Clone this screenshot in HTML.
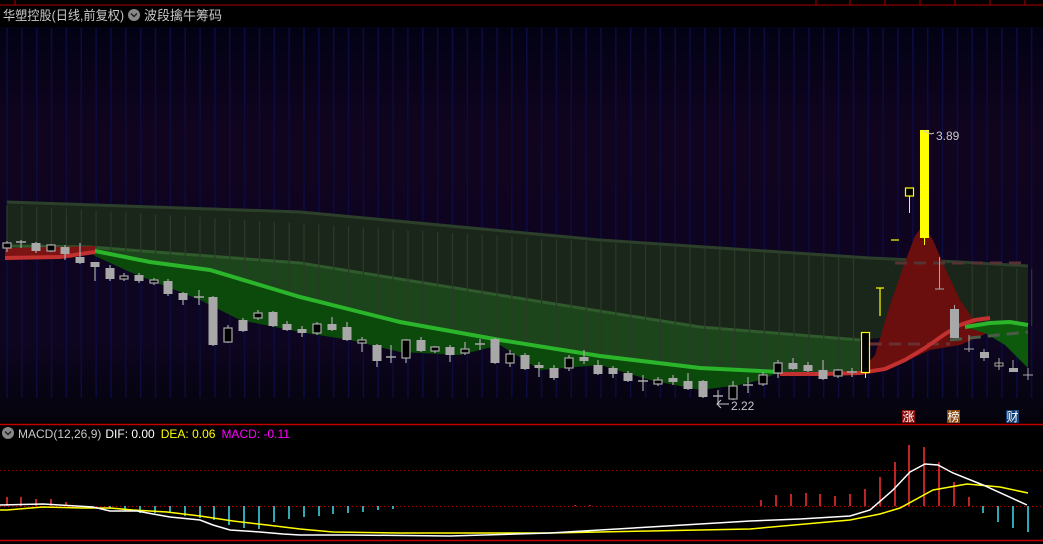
<!DOCTYPE html>
<html><head><meta charset="utf-8"><style>
html,body{margin:0;padding:0;background:#000;width:1043px;height:544px;overflow:hidden}
svg{display:block}
text{font-family:"Liberation Sans","Noto Sans CJK SC",sans-serif}
</style></head><body>
<svg id="s" width="1043" height="544" xmlns="http://www.w3.org/2000/svg">
<defs>
<linearGradient id="bg" x1="0" y1="0" x2="0" y2="1">
<stop offset="0" stop-color="#020214"/>
<stop offset="0.25" stop-color="#10041f"/>
<stop offset="0.8" stop-color="#0e0520"/>
<stop offset="0.93" stop-color="#060412"/>
<stop offset="1" stop-color="#04030c"/>
</linearGradient>
</defs>
<rect x="0" y="0" width="1043" height="544" fill="#000"/>
<line x1="0" y1="5" x2="1043" y2="5" stroke="#b00000" stroke-width="1"/>
<line x1="15" y1="0" x2="15" y2="5" stroke="#b00000"/>
<g stroke="#b00000"><line x1="816" y1="0" x2="816" y2="5"/><line x1="850" y1="0" x2="850" y2="5"/><line x1="885" y1="0" x2="885" y2="5"/><line x1="920" y1="0" x2="920" y2="5"/><line x1="955" y1="0" x2="955" y2="5"/><line x1="990" y1="0" x2="990" y2="5"/><line x1="1025" y1="0" x2="1025" y2="5"/></g>
<text x="3" y="20" font-size="13" fill="#c8c8c8" textLength="121" lengthAdjust="spacingAndGlyphs">华塑控股(日线,前复权)</text>
<circle cx="134" cy="15" r="6" fill="#888"/>
<path d="M131 13.5 L134 16.5 L137 13.5" stroke="#222" stroke-width="1.5" fill="none"/>
<text x="144" y="20" font-size="13" fill="#c8c8c8">波段擒牛筹码</text>
<rect x="0" y="27" width="1043" height="395" fill="url(#bg)"/>
<g id="vl" stroke="#0c0c40" stroke-width="1.5"></g>
<polygon fill="#1b261a" points="7,202 300,212 600,240 870,258 960,262 1028,266 1028,330 960,330 860,340 700,327 530,300 300,263 90,247 7,246"/>
<polyline fill="none" stroke="#2c3f2a" stroke-width="3" points="7,202 300,212 600,240 870,258 960,262 1028,266"/>
<polygon fill="#1d451c" points="7,246 90,247 300,263 530,300 700,327 860,340 860,372 780,372 700,368 600,356 500,340 400,322 300,297 210,270 150,262 90,250"/>
<polyline fill="none" stroke="#2e5a2c" stroke-width="3" points="7,246 90,247 300,263 530,300 700,327 860,340"/>
<polygon fill="#0b4a0b" points="90,250 150,262 210,270 300,297 400,322 500,340 600,356 700,368 780,372 760,380 740,385 700,390 650,380 600,365 540,370 500,345 460,355 400,352 350,340 300,332 240,320 200,300 130,272 95,256"/>
<g id="vl2" stroke="#2a3a28" stroke-width="1.2"></g>
<polyline fill="none" stroke="#2ab52a" stroke-width="4" points="90,250 150,262 210,270 300,297 400,322 500,340 600,356 700,368 780,372"/>
<polygon fill="#7d1414" points="5,248 95,246 95,252 70,258 5,260"/>
<polyline fill="none" stroke="#c33030" stroke-width="4" points="5,258 60,257 95,252"/>
<polygon fill="#6b0e0e" points="860,372 875,355 890,305 905,262 915,236 923,225 933,240 945,268 960,300 975,322 990,332 960,345 930,350 900,364"/>
<polygon fill="#0d5a0d" points="965,327 990,323 1010,322 1028,325 1028,368 1005,345 985,333"/>
<polyline fill="none" stroke="#2ab52a" stroke-width="4" points="965,327 990,323 1010,322 1028,325"/>
<line x1="895" y1="263" x2="1028" y2="263" stroke="#553333" stroke-width="3" stroke-dasharray="12,7"/>
<line x1="870" y1="344" x2="950" y2="344" stroke="#6a3030" stroke-width="3" stroke-dasharray="12,7"/>
<line x1="950" y1="340" x2="1028" y2="332" stroke="#4a5a48" stroke-width="3" stroke-dasharray="12,7"/>
<polyline fill="none" stroke="#c33030" stroke-width="4" points="780,374 820,374 860,373 885,369 905,360 925,348 945,334 960,325 975,320 990,318"/>
<g id="cd"></g>
<text x="936" y="140" font-size="12" fill="#c8c8c8">3.89</text>
<path d="M924 131 L931 134 L934 133" stroke="#c8c8c8" fill="none"/>
<text x="731" y="410" font-size="12" fill="#c8c8c8">2.22</text>
<path d="M729 404 L717 404 M721 400 L717 404 L721 408" stroke="#c8c8c8" fill="none"/>
<rect x="902" y="410" width="13" height="13" fill="#8b0c0c"/><text x="902.5" y="421" font-size="12" fill="#fff">涨</text>
<rect x="947" y="410" width="13" height="13" fill="#8a4a12"/><text x="947.5" y="421" font-size="12" fill="#fff">榜</text>
<rect x="1006" y="410" width="13" height="13" fill="#123f78"/><text x="1006.5" y="421" font-size="12" fill="#fff">财</text>
<line x1="0" y1="424.5" x2="1043" y2="424.5" stroke="#c00000" stroke-width="1.5"/>
<circle cx="8" cy="433" r="6" fill="#888"/>
<path d="M5 431.5 L8 434.5 L11 431.5" stroke="#222" stroke-width="1.5" fill="none"/>
<text x="18" y="438" font-size="12"><tspan fill="#c8c8c8">MACD(12,26,9)</tspan><tspan fill="#fff" dx="4">DIF: 0.00</tspan><tspan fill="#ffff00" dx="6">DEA: 0.06</tspan><tspan fill="#ff00ff" dx="6">MACD: -0.11</tspan></text>
<line x1="0" y1="470.5" x2="1043" y2="470.5" stroke="#a00000" stroke-dasharray="1,3"/>
<line x1="0" y1="506.5" x2="1043" y2="506.5" stroke="#c00000" stroke-dasharray="1,3"/>
<g id="hb"></g>
<polyline fill="none" stroke="#ffff00" stroke-width="1.5" points="0,510 7,510 43,507 83,508 110,508 133,510 167,512 200,516 233,521 267,525 300,529 333,532 400,533 550,533 650,531 750,529 850,520 880,514 900,508 933,490 967,484 1000,487 1028,493"/>
<polyline fill="none" stroke="#ffffff" stroke-width="1.5" points="0,505 43,504 93,507 110,511 137,511 153,514 170,517 200,520 213,525 230,530 260,532 283,534 300,535 350,535 450,536 550,533 600,530 650,527 700,524 750,521 800,519 850,516 870,510 893,490 910,472 925,464 938,465 953,473 983,485 1027,505"/>
<line x1="0" y1="540.5" x2="1043" y2="540.5" stroke="#c00000" stroke-width="1.5"/>
</svg>
<script>
var NS="http://www.w3.org/2000/svg";
function el(p,n,a){var e=document.createElementNS(NS,n);for(var k in a)e.setAttribute(k,a[k]);p.appendChild(e);return e;}
var vl=document.getElementById('vl'),vl2=document.getElementById('vl2');
for(var i=0;i<70;i++){var x=7+14.85*i;el(vl,'line',{x1:x,y1:28,x2:x,y2:398});}
function T(x){return 202+64*(x-7)/1021;}
var GP=[[0,246],[90,248],[150,262],[210,270],[300,297],[400,322],[500,340],[600,356],[700,368],[780,372],[860,372]];
function Gf(x){for(var i=1;i<GP.length;i++){if(x<=GP[i][0]){var a=GP[i-1],b=GP[i];return a[1]+(b[1]-a[1])*(x-a[0])/(b[0]-a[0]);}}return 372;}
for(var i=0;i<70;i++){var x=7+14.85*i;if(x>860&&x<960)continue;el(vl2,'line',{x1:x,y1:T(x)+3,x2:x,y2:x<960?Gf(x)-2:326});}
var C=[
[7,243,248,'h',241,252],[21,242,244,'c',240,248],[36,243,251,'g',242,253],[51,245,251,'h',244,252],[65,247,254,'g',245,260],
[80,257,263,'g',243,264],[95,262,267,'g',262,281],[110,268,279,'g',265,281],[124,276,279,'h',273,281],[139,275,281,'g',273,283],
[154,280,283,'h',278,285],[168,281,294,'g',279,296],[183,293,300,'g',292,305],[199,297,299,'c',290,305],[213,297,345,'g',296,346],
[228,328,342,'h',325,343],[243,320,331,'g',318,332],[258,313,318,'h',310,320],[273,312,326,'g',311,327],[287,324,330,'g',321,331],
[302,329,333,'g',326,337],[317,324,333,'h',322,335],[332,324,330,'g',317,331],[347,327,340,'g',322,341],[362,340,343,'h',337,352],
[377,345,361,'g',344,367],[391,357,358,'c',345,363],[406,340,358,'h',339,363],[421,340,351,'g',337,352],[435,347,351,'h',346,353],
[450,347,355,'g',345,362],[465,349,353,'h',342,355],[480,344,345,'c',339,350],[495,339,363,'g',338,364],[510,354,363,'h',350,367],
[525,355,369,'g',353,370],[539,365,368,'g',362,377],[554,368,378,'g',365,380],[569,358,368,'h',355,371],[584,357,361,'g',350,364],
[598,365,374,'g',360,375],[613,368,374,'g',366,378],[628,373,381,'g',371,382],[643,381,382,'c',375,391],[658,380,384,'h',377,386],
[673,378,382,'g',375,385],[688,381,389,'g',373,390],[703,381,397,'g',380,398],[718,396,397,'c',390,404],[733,386,399,'h',381,400],
[748,385,386,'c',377,393],[763,375,384,'h',372,386],[778,363,373,'h',360,378],[793,363,369,'g',358,370],[808,365,371,'g',362,372],
[823,370,379,'g',360,380],[838,370,376,'h',369,378],[852,372,373,'c',368,377]];
var cd=document.getElementById('cd');
C.forEach(function(c){var x=c[0];var col='#a8a8a8';
 el(cd,'line',{x1:x,y1:c[4],x2:x,y2:c[5],stroke:col,'stroke-width':1.2});
 if(c[3]=='c'){el(cd,'line',{x1:x-5,y1:c[1],x2:x+5,y2:c[1],stroke:col,'stroke-width':1.5});}
 else if(c[3]=='g'){el(cd,'rect',{x:x-4.5,y:c[1],width:9,height:c[2]-c[1],fill:col});}
 else{el(cd,'rect',{x:x-4,y:c[1],width:8,height:Math.max(c[2]-c[1],2),fill:'#000',stroke:col,'stroke-width':1.2});}
});
var Y='#ffff00',G='#a8a8a8';
el(cd,'rect',{x:861.5,y:332.5,width:8,height:40,fill:'#000',stroke:Y,'stroke-width':1.2});
el(cd,'line',{x1:865.5,y1:372,x2:865.5,y2:378,stroke:Y});
el(cd,'line',{x1:880,y1:288,x2:880,y2:316,stroke:Y,'stroke-width':1.2});
el(cd,'line',{x1:876,y1:288,x2:884,y2:288,stroke:Y,'stroke-width':1.2});
el(cd,'line',{x1:891,y1:240,x2:899,y2:240,stroke:Y,'stroke-width':1.2});
el(cd,'rect',{x:905.5,y:188,width:8,height:8,fill:'#000',stroke:Y,'stroke-width':1.2});
el(cd,'line',{x1:909.5,y1:196,x2:909.5,y2:213,stroke:Y});
el(cd,'rect',{x:920,y:130,width:9,height:108,fill:Y});
el(cd,'line',{x1:924.5,y1:238,x2:924.5,y2:245,stroke:Y});
el(cd,'line',{x1:939.5,y1:257,x2:939.5,y2:289,stroke:G});
el(cd,'line',{x1:935,y1:289,x2:944,y2:289,stroke:G});
el(cd,'rect',{x:950,y:309,width:9,height:29,fill:G});
el(cd,'line',{x1:954.5,y1:305,x2:954.5,y2:309,stroke:G});
el(cd,'line',{x1:969,y1:335,x2:969,y2:352,stroke:G});el(cd,'line',{x1:964,y1:349,x2:974,y2:349,stroke:G});
el(cd,'rect',{x:980,y:352,width:9,height:6,fill:G});el(cd,'line',{x1:984,y1:349,x2:984,y2:361,stroke:G});
el(cd,'rect',{x:995,y:363,width:8,height:3,fill:'#000',stroke:G});el(cd,'line',{x1:999,y1:358,x2:999,y2:370,stroke:G});
el(cd,'rect',{x:1009,y:368,width:9,height:4,fill:G});el(cd,'line',{x1:1013,y1:360,x2:1013,y2:368,stroke:G});
el(cd,'line',{x1:1028,y1:368,x2:1028,y2:380,stroke:G});el(cd,'line',{x1:1023,y1:375,x2:1033,y2:375,stroke:G});
var hb=document.getElementById('hb');
var H=[[7,497],[21,497],[36,499],[51,499],[66,502],
[110,509],[125,511],[140,513],[155,513],[170,512],[185,516],[200,518],[214,520],[229,525],[244,528],[259,529],[274,522],[289,519],[304,517],[319,516],[333,514],[348,513],[363,512],[378,510],[393,509],
[575,505],[590,505],
[761,500],[776,495],[791,494],[806,493],[820,494],[835,496],[850,494],[865,489],[880,477],[895,462],[909,445],[924,447],[939,462],[954,482],[969,497],
[983,513],[998,522],[1013,528],[1028,532]];
H.forEach(function(h){var up=h[1]<506;el(hb,'line',{x1:h[0],y1:h[1],x2:h[0],y2:506,stroke:up?'#ff3030':'#40e0f0','stroke-width':1.5});});
</script>
</body></html>
